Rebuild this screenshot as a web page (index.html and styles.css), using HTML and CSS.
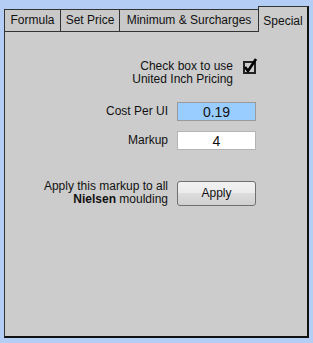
FILE: index.html
```html
<!DOCTYPE html>
<html lang="en">
<head>
  <meta charset="UTF-8">
  <title>Moulding Pricing</title>
  <link rel="stylesheet" href="styles.css">
</head>
<body>

  <div class="window">
    <div class="tabs">
      <div class="tab tab-formula">Formula</div>
      <div class="tab tab-price">Set Price</div>
      <div class="tab tab-min">Minimum &amp; Surcharges</div>
      <div class="tab tab-special active">Special</div>
    </div>

    <div class="panel">
      <div class="row row-check">
        <label class="label" for="use-ui">Check box to use<br>United Inch Pricing</label>
        <span class="checkbox" id="use-ui">
          <svg width="16" height="16" viewBox="0 -3 16 16">
            <polyline points="2,6 5,10 13,-2" fill="none" stroke="#000" stroke-width="2.6"/>
          </svg>
        </span>
      </div>

      <div class="row row-cost">
        <span class="label">Cost Per UI</span>
        <input class="field field-cost" type="text" value="0.19">
      </div>

      <div class="row row-markup">
        <span class="label">Markup</span>
        <input class="field" type="text" value="4">
      </div>

      <div class="row row-apply">
        <span class="label">Apply this markup to all<br><b>Nielsen</b> moulding</span>
        <button class="apply-btn">Apply</button>
      </div>
    </div>
  </div>

</body>
</html>
```

FILE: styles.css
```css
body {
  margin: 0;
  background-color: #b4cdf5;
  font-family: 'Liberation Sans', Arial, sans-serif;
  font-size: 12px;
  color: #111;
}

.window {
  padding: 6px 0 0 4px;
  width: 305px;
}

/* tab strip */
.tabs {
  display: flex;
  align-items: flex-end;
  height: 26px;
}

.tab {
  box-sizing: border-box;
  height: 23px;
  line-height: 21px;
  text-align: center;
  background-color: #c9c9c9;
  border-top: 1px solid #333;
  border-right: 1px solid #333;
  border-bottom: 1px solid #333;
  white-space: nowrap;
}

.tab-formula {
  width: 57px;
  border-left: 1px solid #333;
}

.tab-price {
  width: 59px;
}

.tab-min {
  width: 138px;
  border-right: none;
}

.tab.active {
  width: 51px;
  height: 26px;
  padding-top: 4px;
  background-color: #cccccc;
  border-left: 1px solid #333;
  border-right: 2px solid #111;
  border-bottom: none;
}

/* panel */
.panel {
  box-sizing: border-box;
  width: 305px;
  height: 306px;
  padding: 28px 51px 0 0;
  background-color: #cccccc;
  border-left: 1px solid #333;
  border-right: 2px solid #111;
  border-bottom: 2px solid #111;
}

.row {
  display: flex;
  justify-content: flex-end;
  align-items: center;
  gap: 9px;
}

.label {
  text-align: right;
  line-height: 13px;
}

.row-check {
  align-items: flex-start;
  gap: 10px;
}

.checkbox {
  position: relative;
  box-sizing: border-box;
  width: 13px;
  height: 13px;
  margin-top: 1px;
  border: 2px solid #222;
}

.checkbox svg {
  position: absolute;
  left: -2px;
  top: -5px;
}

.row-cost {
  margin-top: 16px;
}

.row-markup {
  margin-top: 10px;
}

.row-apply {
  margin-top: 30px;
}

.field {
  box-sizing: border-box;
  width: 79px;
  height: 19px;
  padding: 0;
  border: 1px solid #b4b4b4;
  background-color: #fff;
  font-family: 'Liberation Sans', Arial, sans-serif;
  font-size: 14px;
  color: #111;
  text-align: center;
}

.field-cost {
  background-color: #99ccff;
  border-color: #9a9a9a;
}

.apply-btn {
  box-sizing: border-box;
  width: 79px;
  height: 25px;
  padding: 0;
  border: 1px solid #707070;
  border-radius: 3px;
  background: linear-gradient(#f2f2f2, #ebebeb 50%, #dddddd 50%, #cfcfcf);
  font-family: 'Liberation Sans', Arial, sans-serif;
  font-size: 12px;
  color: #111;
}
```
